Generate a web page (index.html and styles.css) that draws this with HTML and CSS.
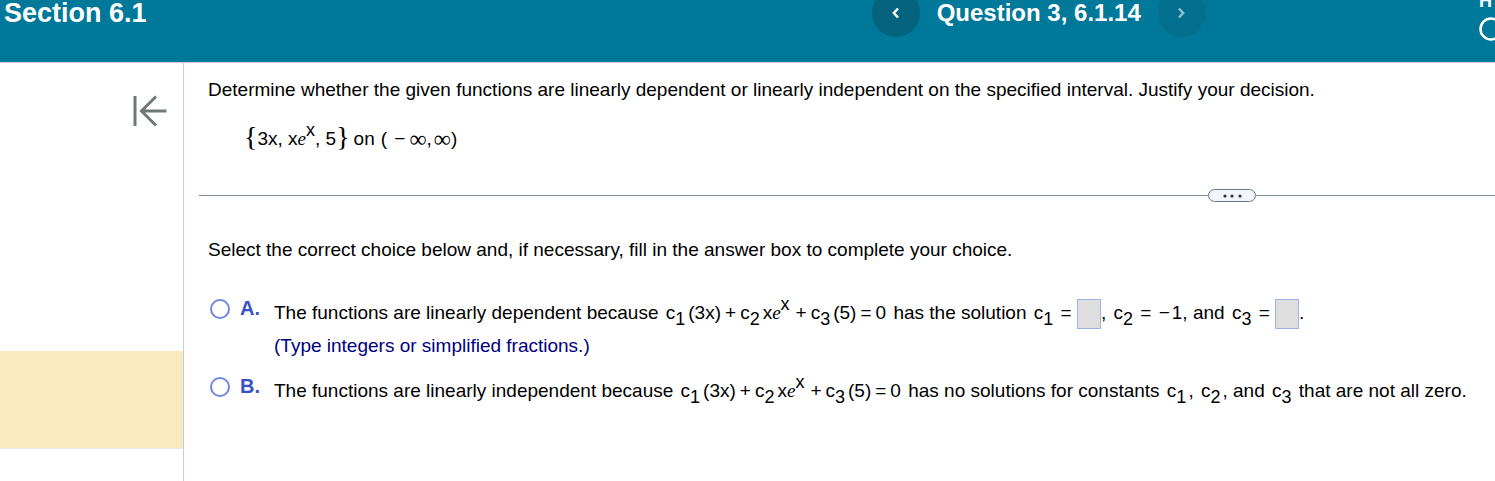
FILE: index.html
```html
<!DOCTYPE html>
<html lang="en">
<head>
    <meta charset="UTF-8">
    <meta name="viewport" content="width=device-width, initial-scale=1.0">
    <title>Section 6.1 - Question 3</title>
    <link rel="stylesheet" href="styles.css">
</head>
<body>

    <!-- Header -->
    <header class="top-bar">
        <div class="top-row">
            <h1 class="section-title">Section 6.1</h1>
            <nav class="question-nav">
                <button class="nav-button" type="button" aria-label="Previous question">
                    <svg width="10" height="12" viewBox="0 0 10 12"><path d="M7 1.5 2.8 6 7 10.5"/></svg>
                </button>
                <h2 class="question-title">Question 3, 6.1.14</h2>
                <button class="nav-button next" type="button" aria-label="Next question" disabled>
                    <svg width="10" height="12" viewBox="0 0 10 12"><path d="M2 1.5 6.2 6 2 10.5"/></svg>
                </button>
            </nav>
            <div class="score">
                <span class="score-label">H</span>
                <svg width="24" height="24" viewBox="0 0 24 24"><circle cx="12" cy="12" r="10.5"/></svg>
            </div>
        </div>
    </header>

    <div class="layout">
        <!-- Sidebar -->
        <aside class="sidebar">
            <button class="collapse-button" type="button" aria-label="Collapse question list">
                <svg width="34" height="32" viewBox="0 0 34 32"><path d="M2 1v30M33.5 16H9M23 1.5 8.5 16 23 30.5"/></svg>
            </button>
            <div class="current-question"></div>
        </aside>

        <!-- Question -->
        <main class="content">
            <section class="question">
                <p>Determine whether the given functions are linearly dependent or linearly independent on the specified interval. Justify your decision.</p>
                <p class="given"><span class="brace">{</span>3x, x<i>e</i><sup>x</sup>, 5<span class="brace">}</span><span class="on">on</span>( <span class="neg">−</span><span class="inf">∞</span>,<span class="inf">∞</span>)</p>
            </section>

            <div class="divider">
                <button class="more-button" type="button" aria-label="Resize panel">
                    <svg width="20" height="4" viewBox="0 0 20 4"><circle cx="3" cy="2" r="1.6"/><circle cx="10" cy="2" r="1.6"/><circle cx="18" cy="2" r="1.6"/></svg>
                </button>
            </div>

            <section class="answers">
                <p>Select the correct choice below and, if necessary, fill in the answer box to complete your choice.</p>

                <div class="choice">
                    <input type="radio" name="choice" id="choice-a">
                    <label class="letter" for="choice-a">A.</label>
                    <div class="choice-text">
                        <p>The functions are linearly dependent because <span class="math">c<sub>1</sub><span class="term">(3x)</span><span class="op">+</span>c<sub>2</sub><span class="term">x<i>e</i><sup>x</sup></span><span class="op wide">+</span>c<sub>3</sub><span class="term">(5)</span><span class="op">=</span>0</span> has the solution <span class="math">c<sub>1</sub></span> = <input class="answer-box" type="text" aria-label="c1" disabled>, <span class="math">c<sub>2</sub></span> = <span class="neg">−</span>1, and <span class="math">c<sub>3</sub></span> = <input class="answer-box" type="text" aria-label="c3" disabled>.</p>
                        <p class="hint">(Type integers or simplified fractions.)</p>
                    </div>
                </div>

                <div class="choice">
                    <input type="radio" name="choice" id="choice-b">
                    <label class="letter" for="choice-b">B.</label>
                    <div class="choice-text">
                        <p>The functions are linearly independent because <span class="math">c<sub>1</sub><span class="term">(3x)</span><span class="op">+</span>c<sub>2</sub><span class="term">x<i>e</i><sup>x</sup></span><span class="op wide">+</span>c<sub>3</sub><span class="term">(5)</span><span class="op">=</span>0</span> has no solutions for constants <span class="math">c<sub>1</sub></span>, <span class="math">c<sub>2</sub></span>, and <span class="math">c<sub>3</sub></span> that are not all zero.</p>
                    </div>
                </div>
            </section>
        </main>
    </div>

</body>
</html>
```
FILE: styles.css
```css
* {
    box-sizing: border-box;
}
body {
    display: flex;
    flex-direction: column;
    min-height: 100vh;
    margin: 0;
    overflow: hidden;
    font-family: Arial, "Liberation Sans", sans-serif;
    font-size: 19px;
    line-height: 24px;
    color: #000;
    background-color: #fff;
}
h1, h2, p {
    margin: 0;
}
button {
    padding: 0;
    border: none;
    background: none;
    cursor: pointer;
}
svg {
    display: block;
    fill: none;
}

/* Header */
.top-bar {
    height: 63px;
    background-color: #007899;
    border-bottom: 1px solid #c8cbdc;
    color: #fff;
    overflow: hidden;
}
.top-row {
    display: grid;
    grid-template-columns: 3fr auto 1fr;
    align-items: center;
    margin-top: -15px;
    padding-left: 4px;
}
.section-title, .question-title {
    font-size: 24px;
    font-weight: bold;
    line-height: 30px;
}
.section-title {
    font-size: 27px;
}
.question-nav {
    display: flex;
    align-items: center;
    gap: 17px;
}
.nav-button {
    display: flex;
    align-items: center;
    justify-content: center;
    width: 48px;
    height: 48px;
    border-radius: 50%;
    background-color: #05637f;
}
.nav-button svg {
    stroke: #fff;
    stroke-width: 2.4;
}
.nav-button.next {
    background-color: #037090;
}
.nav-button.next svg {
    stroke: #8fc0cf;
}
.score {
    justify-self: end;
    margin-right: -8px;
    padding-top: 4px;
    stroke: #fff;
    stroke-width: 2.5;
}
.score-label {
    display: block;
    margin-bottom: 4px;
    font-size: 18px;
    font-weight: bold;
    stroke: none;
}

/* Sidebar */
.layout {
    display: flex;
    flex: 1;
}
.sidebar {
    width: 184px;
    flex-shrink: 0;
    border-right: 1px solid #c8cbdc;
}
.collapse-button {
    display: block;
    margin: 32px 16px 0 auto;
}
.collapse-button svg {
    stroke: #6f7777;
    stroke-width: 3;
}
.current-question {
    height: 98px;
    margin-top: 224px;
    background-color: #f9ebbd;
    border-bottom: 1px solid #e8e8ee;
}

/* Question */
.content {
    flex: 1;
    min-width: 0;
    padding-left: 15px;
}
.question {
    height: 132px;
    padding: 15px 9px 0;
}
.given {
    margin: 25px 0 0 36px;
}
.brace {
    font-family: "Liberation Serif", serif;
    font-size: 28px;
    line-height: 0;
    vertical-align: -1px;
}
.on {
    margin: 0 6px 0 4px;
}
.inf {
    font-family: "Liberation Serif", serif;
    font-size: 24px;
    line-height: 0;
    margin-left: 2px;
    vertical-align: -2px;
}
i {
    font-family: "Liberation Serif", serif;
}
sub, sup {
    font-size: 18px;
    line-height: 0;
}
sub {
    vertical-align: -6px;
}
sup {
    vertical-align: 9px;
}
.math, .neg {
    margin: 0 2px;
}
.term {
    margin-left: 3px;
}
.op {
    margin: 0 4px;
}
.op.wide {
    margin-left: 6px;
}
.divider {
    display: flex;
    align-items: center;
    height: 1px;
    background-color: #7f8fa3;
}
.more-button {
    display: flex;
    align-items: center;
    justify-content: center;
    width: 48px;
    height: 13px;
    margin-left: auto;
    margin-right: 239px;
    border: 1px solid #66788f;
    border-radius: 7px;
    background-color: #f3f4f9;
}
.more-button svg {
    fill: #333;
}

/* Answers */
.answers {
    padding: 42px 9px 0;
}
.choice {
    display: flex;
    align-items: flex-start;
}
.choice:first-of-type {
    margin-top: 34px;
}
.choice input[type="radio"] {
    appearance: none;
    width: 20px;
    height: 20px;
    margin: 3px 10px 0 2px;
    border: 2px solid #7287dd;
    border-radius: 50%;
}
.letter {
    width: 34px;
    font-size: 20px;
    font-weight: bold;
    color: #3a50c8;
}
.choice-text p {
    line-height: 34px;
}
.choice-text .hint {
    height: 44px;
    line-height: 32px;
    color: #000080;
}
.answer-box {
    width: 24px;
    height: 30px;
    padding: 0;
    border: 1px solid #9ab3e8;
    background-color: #dedede;
    vertical-align: middle;
}
```
